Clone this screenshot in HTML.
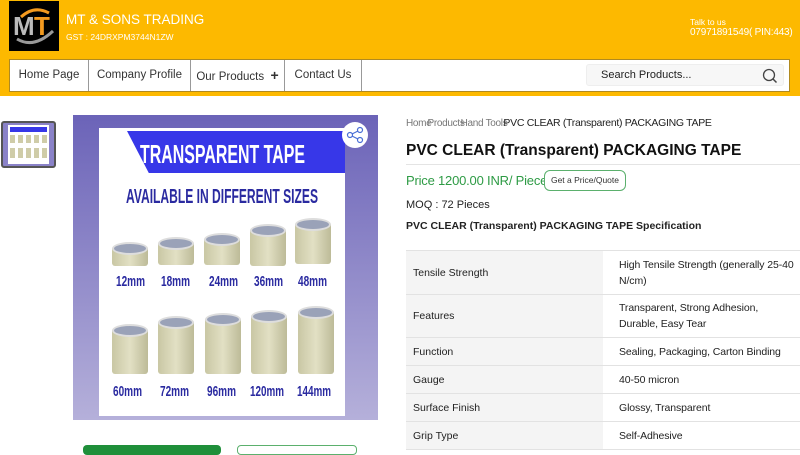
<!DOCTYPE html>
<html><head><meta charset="utf-8"><style>
*{margin:0;padding:0;box-sizing:border-box}
body{width:800px;height:450px;overflow:hidden;background:#fff;font-family:"Liberation Sans",sans-serif;position:relative;color:#222}
.a{position:absolute;white-space:nowrap}
.hdr{left:0;top:0;width:800px;height:96px;background:#fdb900}
.nav{left:9px;top:59px;width:781px;height:33px;background:#fff;border:1px solid #b08a20}
.nav div{position:absolute;top:0;height:31px;line-height:31px;font-size:11.5px;color:#333;text-align:center;border-right:1px solid #999}
td{font-size:10.5px;padding:0 7px;border-bottom:1px solid #e2e2e2;vertical-align:middle;line-height:16px}
td.l{background:#f4f4f4;width:197px}
td.r{padding:0 2px 0 16px;letter-spacing:-.1px}
.tape{position:absolute;background:linear-gradient(90deg,#c9c7a4,#e2e0c4 50%,#bdbb98);border-radius:3px}
.tape:before{content:"";position:absolute;left:0;right:0;top:-4px;height:9px;border-radius:50%;background:#9aa2b8;border:2px solid #ddd}
</style></head><body>
<div class="a hdr"></div>
<div class="a" style="left:9px;top:1px;width:50px;height:50px;background:#000"><svg width="50" height="50"><text x="4" y="34" font-family="Liberation Sans" font-weight="bold" font-size="26" fill="#bbb">M</text><text x="25" y="34" font-family="Liberation Sans" font-weight="bold" font-size="26" fill="#f39a1f">T</text><path d="M8 38 Q25 48 44 30" stroke="#999" stroke-width="3" fill="none"/><path d="M12 16 Q25 4 40 12" stroke="#f39a1f" stroke-width="3" fill="none"/></svg></div>
<div class="a" style="left:66px;top:12px;font-size:13.5px;color:#fff">MT &amp; SONS TRADING</div>
<div class="a" style="left:66px;top:32px;font-size:8.5px;color:#fff">GST : 24DRXPM3744N1ZW</div>
<div class="a" style="left:690px;top:17px;font-size:8.5px;color:#fff">Talk to us</div>
<div class="a" style="left:690px;top:27px;font-size:10px;color:#fff;letter-spacing:-.2px">07971891549( PIN:443)</div>
<div class="a nav">
<div style="left:0;width:79px">Home Page</div>
<div style="left:79px;width:102px">Company Profile</div>
<div style="left:181px;width:94px">Our Products &nbsp;<b style="font-size:14px">+</b></div>
<div style="left:275px;width:77px">Contact Us</div>
</div>
<div class="a" style="left:586px;top:64px;width:198px;height:22px;background:#f7f7f7;border:1px solid #eee;border-radius:3px;font-size:11px;line-height:20px;padding-left:14px;color:#222">Search Products...
<svg class="a" style="right:5px;top:3px" width="16" height="16"><circle cx="7" cy="7" r="5.5" stroke="#444" stroke-width="1.3" fill="none"/><path d="M11 11 L14.5 14.5" stroke="#444" stroke-width="1.5"/></svg></div>
<div class="a" style="left:1px;top:121px;width:55px;height:47px;border:2px solid #555;border-radius:3px;background:#8a82c8"><div style="margin:2px 5px;height:39px;background:#fff;padding:2px"><div style="height:5px;background:#3737e8"></div><div style="margin-top:3px;height:8px;background:repeating-linear-gradient(90deg,#cfcca8 0 5px,#fff 5px 8px)"></div><div style="margin-top:5px;height:10px;background:repeating-linear-gradient(90deg,#cfcca8 0 5px,#fff 5px 8px)"></div></div></div>
<div class="a" style="left:73px;top:115px;width:305px;height:305px;background:linear-gradient(#6b63b8,#b5b0da)"></div>
<div class="a" style="left:99px;top:128px;width:246px;height:288px;background:#fff"></div>
<div class="a" style="left:127px;top:131px;width:218px;height:42px;background:#3737e8;clip-path:polygon(0 0,100% 0,100% 100%,10% 100%)"></div>
<svg class="a" style="left:0;top:0" width="400" height="450">
<g font-family="Liberation Sans" font-weight="bold">
<text x="140" y="163" font-size="26" fill="#fff" textLength="165" lengthAdjust="spacingAndGlyphs">TRANSPARENT TAPE</text>
<text x="126" y="203" font-size="20" fill="#2a2aa0" textLength="192" lengthAdjust="spacingAndGlyphs">AVAILABLE IN DIFFERENT SIZES</text>
<g font-size="15" fill="#2a2aa0">
<text x="116" y="286" textLength="29" lengthAdjust="spacingAndGlyphs">12mm</text>
<text x="161" y="286" textLength="29" lengthAdjust="spacingAndGlyphs">18mm</text>
<text x="209" y="286" textLength="29" lengthAdjust="spacingAndGlyphs">24mm</text>
<text x="254" y="286" textLength="29" lengthAdjust="spacingAndGlyphs">36mm</text>
<text x="298" y="286" textLength="29" lengthAdjust="spacingAndGlyphs">48mm</text>
<text x="113" y="396" textLength="29" lengthAdjust="spacingAndGlyphs">60mm</text>
<text x="160" y="396" textLength="29" lengthAdjust="spacingAndGlyphs">72mm</text>
<text x="207" y="396" textLength="29" lengthAdjust="spacingAndGlyphs">96mm</text>
<text x="250" y="396" textLength="34" lengthAdjust="spacingAndGlyphs">120mm</text>
<text x="297" y="396" textLength="34" lengthAdjust="spacingAndGlyphs">144mm</text>
</g></g></svg>
<div class="tape" style="left:112px;top:246px;width:36px;height:20px"></div>
<div class="tape" style="left:158px;top:241px;width:36px;height:24px"></div>
<div class="tape" style="left:204px;top:237px;width:36px;height:28px"></div>
<div class="tape" style="left:250px;top:228px;width:36px;height:38px"></div>
<div class="tape" style="left:295px;top:222px;width:36px;height:42px"></div>
<div class="tape" style="left:112px;top:328px;width:36px;height:46px"></div>
<div class="tape" style="left:158px;top:320px;width:36px;height:54px"></div>
<div class="tape" style="left:205px;top:317px;width:36px;height:57px"></div>
<div class="tape" style="left:251px;top:314px;width:36px;height:60px"></div>
<div class="tape" style="left:298px;top:310px;width:36px;height:64px"></div>
<div class="a" style="left:342px;top:122px;width:26px;height:26px;border-radius:50%;background:#fff"><svg width="26" height="26"><g stroke="#4a6fd6" fill="none" stroke-width="1.2"><circle cx="18" cy="8" r="2.5"/><circle cx="8" cy="13" r="2.5"/><circle cx="18" cy="18" r="2.5"/><path d="M10 12 L16 9 M10 14 L16 17"/></g></svg></div>
<div class="a" style="left:83px;top:445px;width:138px;height:10px;background:#1f8f3a;border-radius:4px"></div>
<div class="a" style="left:237px;top:445px;width:120px;height:10px;border:1px solid #5bb06d;border-radius:4px"></div>
<div class="a" style="left:406px;top:117px;font-size:10px;color:#777;letter-spacing:-.3px">Home<span style="margin-left:-4px">Products</span><span style="margin-left:-4px">Hand Tools</span><span style="margin-left:-4px;color:#222;font-size:10.5px">PVC CLEAR (Transparent) PACKAGING TAPE</span></div>
<div class="a" style="left:406px;top:142px;font-size:15.5px;font-weight:bold;color:#111">PVC CLEAR (Transparent) PACKAGING TAPE</div>
<div class="a" style="left:406px;top:164px;width:394px;height:1px;background:#e4e4e4"></div>
<div class="a" style="left:406px;top:173px;font-size:13px;color:#2e9b45;letter-spacing:-.2px">Price 1200.00 INR/ Piece</div>
<div class="a" style="left:544px;top:170px;width:82px;height:21px;border:1px solid #5bb06d;border-radius:6px;font-size:8.5px;line-height:19px;text-align:center;color:#333;background:#fff">Get a Price/Quote</div>
<div class="a" style="left:406px;top:199px;font-size:11px">MOQ : 72 Pieces</div>
<div class="a" style="left:406px;top:220px;font-size:10.5px;font-weight:bold">PVC CLEAR (Transparent) PACKAGING TAPE Specification</div>
<table class="a" style="left:406px;top:250px;width:394px;border-collapse:collapse;border-top:1px solid #e2e2e2;white-space:normal">
<tr style="height:44px"><td class="l">Tensile Strength</td><td class="r">High Tensile Strength (generally 25-40 N/cm)</td></tr>
<tr style="height:43px"><td class="l">Features</td><td class="r">Transparent, Strong Adhesion, Durable, Easy Tear</td></tr>
<tr style="height:28px"><td class="l">Function</td><td class="r">Sealing, Packaging, Carton Binding</td></tr>
<tr style="height:28px"><td class="l">Gauge</td><td class="r">40-50 micron</td></tr>
<tr style="height:28px"><td class="l">Surface Finish</td><td class="r">Glossy, Transparent</td></tr>
<tr style="height:28px"><td class="l">Grip Type</td><td class="r">Self-Adhesive</td></tr>
</table>
</body></html>
